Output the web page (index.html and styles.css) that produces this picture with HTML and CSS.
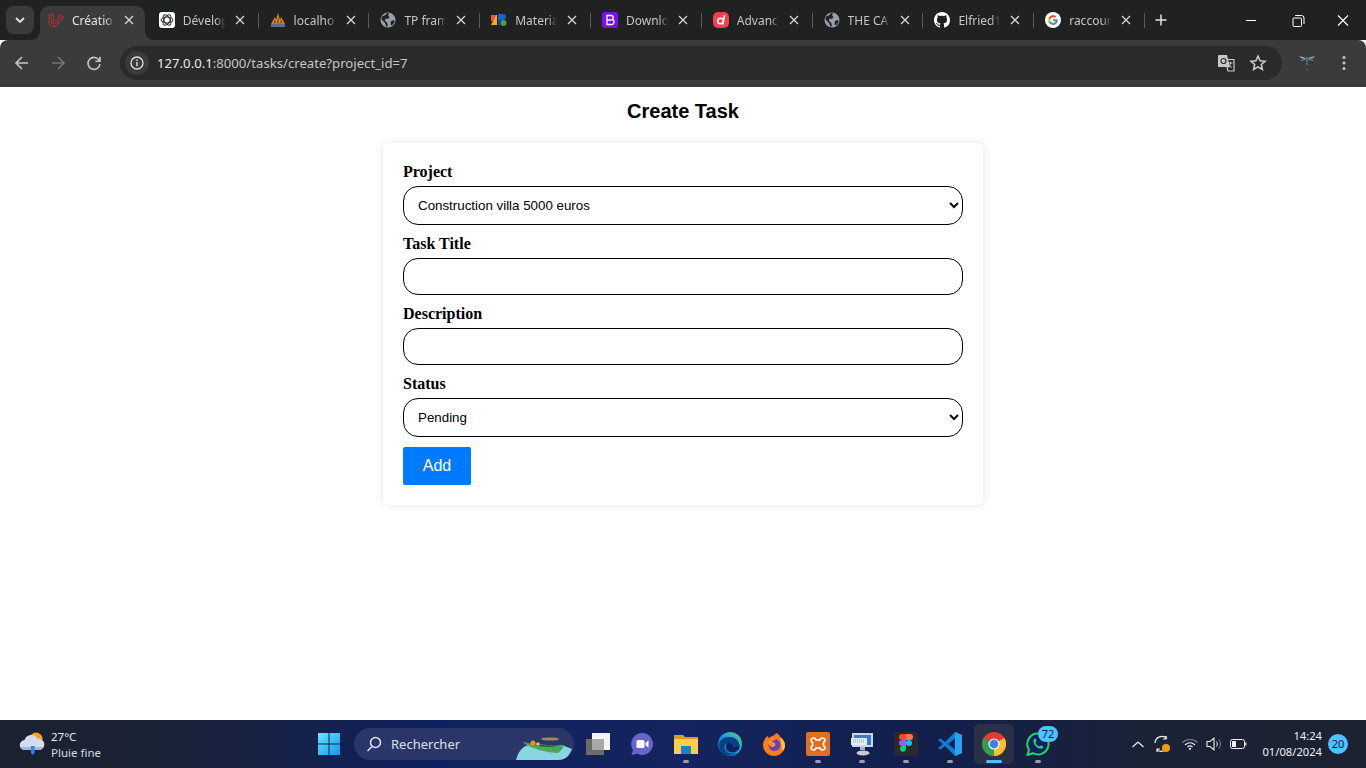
FILE: index.html
```html
<!DOCTYPE html>
<html lang="en">

<head>
    <meta charset="UTF-8">
    <meta name="viewport" content="width=device-width, initial-scale=1.0">
    <title>Create Task</title>
    <link rel="stylesheet" href="styles.css">
</head>

<body>
    <svg class="defs" aria-hidden="true">
        <symbol id="globe" viewBox="0 0 16 16">
            <circle cx="8" cy="8" r="7.500" fill="#9aa0a6" />
            <path d="M2 4.500 5.500 3 7 1l2 .5L8 3.500 9.500 5 8 7 5.500 6.500 5 9l2 1.500 1 3-1.500 1.500-1.500-4L2.500 8.500 1.500 7zM11 9l3-1 .5 2-2.500 3.500-1.500-1z" fill="#202124" />
        </symbol>
        <symbol id="x" viewBox="0 0 10 10">
            <path d="M1 1l8 8M9 1 1 9" fill="none" stroke="currentColor" stroke-width="1.300" />
        </symbol>
    </svg>

    <div class="tabstrip">
        <button class="tab-search">
            <svg width="10" height="6" viewBox="0 0 10 6"><path d="M1 1l4 4 4-4" fill="none" stroke="#e3e3e3" stroke-width="1.800" /></svg>
        </button>
        <div class="tabs">
            <div class="tab active">
                <svg class="favicon" viewBox="0 0 17 17"><path d="M1 3l2.500-1.500L6 3v7l5-2.500v-3L13.500 3 16 4.500v3l-5 3V13l-5 3-5-3zM1 3l2.500 1.500L6 3M3.500 4.500v7L6 13v3M3.500 11.500 6 10M6 13l5-2.500M11 4.500 13.500 6 16 4.500M13.500 6v3" fill="none" stroke="#c2322a" stroke-width=".9" /></svg>
                <span class="tab-title">Créatio</span>
                <svg class="tab-close"><use href="#x" /></svg>
            </div>
            <div class="tab">
                <svg class="favicon" viewBox="0 0 16 16"><rect width="16" height="16" rx="3" fill="#fff" /><g fill="none" stroke="#333" stroke-width="1.100"><ellipse cx="8" cy="8" rx="5.800" ry="3" /><ellipse cx="8" cy="8" rx="5.800" ry="3" transform="rotate(60 8 8)" /><ellipse cx="8" cy="8" rx="5.800" ry="3" transform="rotate(120 8 8)" /></g></svg>
                <span class="tab-title">Dévelop</span>
                <svg class="tab-close"><use href="#x" /></svg>
            </div>
            <div class="tab">
                <svg class="favicon" viewBox="0 0 16 16"><path d="M1 12 5 5l1 3 2-7 2 7 1-3 4 7z" fill="#e58a1f" /><path d="M7 11 8 4l1 7zM3.500 11 5 7l1 4zM10 11l1-4 1.500 4z" fill="#7a4a12" /><rect x="1" y="11.500" width="14" height="3.500" fill="#5a6a9a" /></svg>
                <span class="tab-title">localho</span>
                <svg class="tab-close"><use href="#x" /></svg>
            </div>
            <div class="tab">
                <svg class="favicon"><use href="#globe" /></svg>
                <span class="tab-title">TP fram</span>
                <svg class="tab-close"><use href="#x" /></svg>
            </div>
            <div class="tab">
                <svg class="favicon" viewBox="0 0 16 16"><path d="M0 3h5L2 9H0z" fill="#ef5350" /><path d="M0 13l5-10h1v10z" fill="#f9a825" /><path d="M7 2h5a2.500 2.500 0 0 1 0 6H7z" fill="#1565c0" /><circle cx="12.500" cy="11" r="3" fill="#43a047" /><path d="M7 8h3v5H7z" fill="#0d47a1" /></svg>
                <span class="tab-title">Materia</span>
                <svg class="tab-close"><use href="#x" /></svg>
            </div>
            <div class="tab">
                <svg class="favicon" viewBox="0 0 16 16"><rect width="16" height="16" rx="2.500" fill="#7a12f0" /><path d="M5 3.500h4a2.200 2.200 0 0 1 1 4.200 2.400 2.400 0 0 1-1 4.800H5zM5 8h4" fill="none" stroke="#fff" stroke-width="1.300" /></svg>
                <span class="tab-title">Downlo</span>
                <svg class="tab-close"><use href="#x" /></svg>
            </div>
            <div class="tab">
                <svg class="favicon" viewBox="0 0 16 16"><rect width="16" height="16" rx="5" fill="#f43f4e" /><circle cx="7.500" cy="9" r="2.800" fill="none" stroke="#fff" stroke-width="1.500" /><path d="M11.500 3 9.800 12.500" fill="none" stroke="#fff" stroke-width="1.500" /></svg>
                <span class="tab-title">Advanc</span>
                <svg class="tab-close"><use href="#x" /></svg>
            </div>
            <div class="tab">
                <svg class="favicon"><use href="#globe" /></svg>
                <span class="tab-title">THE CA</span>
                <svg class="tab-close"><use href="#x" /></svg>
            </div>
            <div class="tab">
                <svg class="favicon" viewBox="0 0 16 16"><path fill="#fff" d="M8 0C3.580 0 0 3.580 0 8c0 3.540 2.290 6.530 5.470 7.590.4.070.55-.17.550-.38 0-.19-.01-.82-.01-1.490-2.010.37-2.530-.49-2.690-.94-.09-.23-.48-.94-.82-1.130-.28-.15-.68-.52-.01-.53.630-.01 1.080.58 1.230.82.720 1.210 1.870.87 2.330.66.070-.52.280-.87.510-1.070-1.780-.2-3.640-.89-3.640-3.950 0-.87.310-1.590.820-2.150-.08-.2-.36-1.020.08-2.120 0 0 .67-.21 2.200.82.640-.18 1.320-.27 2-.27s1.360.09 2 .27c1.530-1.040 2.200-.82 2.200-.82.440 1.100.16 1.920.08 2.120.51.560.82 1.270.82 2.150 0 3.070-1.870 3.750-3.650 3.950.29.250.54.730.54 1.480 0 1.070-.01 1.930-.01 2.200 0 .21.150.46.550.38A8.010 8.010 0 0 0 16 8c0-4.420-3.580-8-8-8z" /></svg>
                <span class="tab-title">Elfried1</span>
                <svg class="tab-close"><use href="#x" /></svg>
            </div>
            <div class="tab">
                <svg class="favicon" viewBox="0 0 16 16"><circle cx="8" cy="8" r="8" fill="#fff" /><path d="M12.700 8.200c0-.4 0-.7-.1-1H8v1.900h2.600a2.300 2.300 0 0 1-1 1.500v1.200h1.600c1-.9 1.500-2.100 1.500-3.600z" fill="#4285f4" /><path d="M8 13c1.300 0 2.400-.4 3.200-1.200l-1.600-1.200c-.4.300-1 .5-1.600.5-1.300 0-2.300-.8-2.700-2H3.700v1.200A4.900 4.900 0 0 0 8 13z" fill="#34a853" /><path d="M5.300 9.100a3 3 0 0 1 0-1.900V6H3.700a4.900 4.900 0 0 0 0 4.400z" fill="#fbbc05" /><path d="M8 5c.7 0 1.300.2 1.800.7l1.400-1.400A4.900 4.900 0 0 0 3.700 6l1.600 1.200C5.700 6 6.700 5 8 5z" fill="#ea4335" /></svg>
                <span class="tab-title">raccour</span>
                <svg class="tab-close"><use href="#x" /></svg>
            </div>
            <button class="tab-new">
                <svg width="12" height="12" viewBox="0 0 12 12"><path d="M6 .5v11M.5 6h11" stroke="#e3e3e3" stroke-width="1.500" /></svg>
            </button>
        </div>
        <div class="win-controls">
            <svg class="win-btn" viewBox="0 0 46 40"><path d="M18 20.500h10" stroke="#fff" /></svg>
            <svg class="win-btn" viewBox="0 0 46 40"><path d="M20 18h6.500a1 1 0 0 1 1 1v6.500a1 1 0 0 1-1 1H20a1 1 0 0 1-1-1V19a1 1 0 0 1 1-1zM21 15.500h6.500a2.500 2.500 0 0 1 2.500 2.500v6" fill="none" stroke="#fff" /></svg>
            <svg class="win-btn" viewBox="0 0 46 40"><path d="M18 15.500l10 10M28 15.500l-10 10" stroke="#fff" stroke-width="1.100" /></svg>
        </div>
    </div>

    <div class="toolbar">
        <div class="nav-btns">
            <svg class="nav-btn" viewBox="0 0 36 36"><path d="M24 18H12.500M18 12l-6 6 6 6" fill="none" stroke="#c7c7c7" stroke-width="1.600" /></svg>
            <svg class="nav-btn" viewBox="0 0 36 36"><path d="M12 18h11.500M18 12l6 6-6 6" fill="none" stroke="#747474" stroke-width="1.600" /></svg>
            <svg class="nav-btn" viewBox="0 0 36 36"><path d="M23.300 15.500a6 6 0 1 0 .7 3.500M24 11.800v4.500h-4.500" fill="none" stroke="#c7c7c7" stroke-width="1.600" /></svg>
        </div>
        <div class="omnibox">
            <span class="site-info">
                <svg width="14" height="14" viewBox="0 0 14 14"><circle cx="7" cy="7" r="6" fill="none" stroke="#e3e3e3" stroke-width="1.300" /><path d="M7 6v4.200M7 3.600v1.300" stroke="#e3e3e3" stroke-width="1.400" /></svg>
            </span>
            <span class="url"><span class="url-host">127.0.0.1</span>:8000/tasks/create?project_id=7</span>
            <svg class="omni-icon translate" viewBox="0 0 18 18"><path d="M8 5.500h9v11.500h-6z" fill="none" stroke="#c7c7c7" stroke-width="1.200" /><path d="M2 1h8l3 12H2a1 1 0 0 1-1-1V2a1 1 0 0 1 1-1z" fill="#c7c7c7" /><circle cx="6.500" cy="7" r="2.500" fill="none" stroke="#2a2a2a" stroke-width="1.200" /><path d="M11.500 9h4M13.500 8v1c0 2-1 3.500-2 4.500M12 11c.8 1 1.500 1.800 3 2.500" fill="none" stroke="#c7c7c7" /></svg>
            <svg class="omni-icon" viewBox="0 0 18 18"><path d="M9 2l2.100 4.700 5 .5-3.800 3.300 1.100 5L9 12.900l-4.400 2.600 1.100-5L1.900 7.200l5-.5z" fill="none" stroke="#d0d0d0" stroke-width="1.500" /></svg>
        </div>
        <svg class="ext-icon" viewBox="0 0 18 20"><path d="M1 3.500c3 0 5 .5 7 2-2 .5-5 .5-7-2zM17 3.500c-3 0-5 .5-7 2 2 .5 5 .5 7-2z" fill="#9aa6ad" /><path d="M3 7.500c2-.5 4-1 5.500-1.500M15 7.500c-2-.5-4-1-5.500-1.500" stroke="#7c8a92" /><path d="M9 4v8" stroke="#5b8fb0" stroke-width="1.300" stroke-dasharray="2 1" /><path d="M9 15.500v2" stroke="#666" /></svg>
        <svg class="ext-menu" viewBox="0 0 4 16"><circle cx="2" cy="2.500" r="1.500" fill="#c7c7c7" /><circle cx="2" cy="8" r="1.500" fill="#c7c7c7" /><circle cx="2" cy="13.500" r="1.500" fill="#c7c7c7" /></svg>
    </div>

    <main class="page">
        <h2 class="page-title">Create Task</h2>
        <form class="task-form">
            <label for="project">Project</label>
            <select id="project">
                <option>Construction villa 5000 euros</option>
            </select>
            <label for="title">Task Title</label>
            <input type="text" id="title">
            <label for="description">Description</label>
            <input type="text" id="description">
            <label for="status">Status</label>
            <select id="status">
                <option>Pending</option>
            </select>
            <button type="button" class="add-btn">Add</button>
        </form>
    </main>

    <div class="taskbar">
        <div class="weather">
            <svg class="weather-icon" viewBox="0 0 28 26"><circle cx="18" cy="8" r="6.500" fill="#f5a623" /><path d="M7 19a5 5 0 0 1-.5-10 7 7 0 0 1 13-1 5.500 5.500 0 0 1 2.500 11z" fill="#d5dcf0" /><path d="M7 19a5 5 0 0 1-4-3h22a5 5 0 0 1-3 3z" fill="#aab4d8" /><path d="M13 15h3.500v7a1.800 1.800 0 0 1-3.500 0z" fill="#2b88f0" /></svg>
            <div class="weather-text">
                <div>27°C</div>
                <div class="weather-sub">Pluie fine</div>
            </div>
        </div>
        <div class="task-item">
            <svg class="task-icon" viewBox="0 0 24 24"><defs><linearGradient id="win" x1="0" y1="0" x2="1" y2="1"><stop offset="0" stop-color="#6fe3ff" /><stop offset="1" stop-color="#0a9be8" /></linearGradient></defs><path d="M1 1h10.500v10.500H1zM12.500 1H23v10.500H12.500zM1 12.500h10.500V23H1zM12.500 12.500H23V23H12.500z" fill="url(#win)" /></svg>
        </div>
        <div class="search">
            <svg width="16" height="16" viewBox="0 0 16 16"><circle cx="9.500" cy="6.500" r="5" fill="none" stroke="#e3e6f0" stroke-width="1.500" /><path d="M6 10.500 1.500 15" stroke="#e3e6f0" stroke-width="1.500" /></svg>
            <span class="search-label">Rechercher</span>
            <svg class="search-art" viewBox="0 0 58 32"><path d="M0 32c2-8 6-13 12-15h34l10 4c-2 5-5 9-9 11z" fill="#8ad6e0" /><path d="M6 14c10 7 26 11 36 11 3-2 5-5 6-8-12 1-28-1-42-3z" fill="#4aa65c" /><path d="M10 15c10 2 24 3 34 2-8 3-22 2-34-2z" fill="#24532f" /><circle cx="17" cy="15" r="2.600" fill="#f08a24" /><circle cx="22" cy="16" r="1.800" fill="#e9c46a" /><ellipse cx="34" cy="11" rx="9" ry="1.600" fill="#a88656" /></svg>
        </div>
        <div class="task-apps">
            <div class="task-item">
                <svg class="task-icon" viewBox="0 0 24 24"><rect x="6" y="1" width="18" height="17" fill="#f4f4f4" /><rect x="0" y="7" width="18" height="16" fill="#6b6b6b" /><rect x="6" y="7" width="12" height="11" fill="#a8a8a8" /></svg>
            </div>
            <div class="task-item">
                <svg class="task-icon" viewBox="0 0 24 24"><path d="M12 1a11 11 0 1 1-5 20.800L1.500 23 3 18A11 11 0 0 1 12 1z" fill="#6a63c9" /><rect x="6.500" y="8" width="8" height="8" rx="1.500" fill="#fff" /><path d="M15.500 11l3-2.500v7l-3-2.500z" fill="#fff" /></svg>
            </div>
            <div class="task-item running">
                <svg class="task-icon" viewBox="0 0 24 24"><path d="M0 3h9l2 2h13v3H0z" fill="#d99c1c" /><path d="M0 7h24v15H0z" fill="#fbcf4a" /><rect x="7" y="14" width="10" height="8" rx="1" fill="#1c7fd0" /></svg>
            </div>
            <div class="task-item">
                <svg class="task-icon" viewBox="0 0 24 24"><defs><linearGradient id="edge" x1="0" y1="1" x2="1" y2="0"><stop offset="0" stop-color="#0c59a4" /><stop offset=".55" stop-color="#1b9de2" /><stop offset="1" stop-color="#5ad66a" /></linearGradient></defs><circle cx="12" cy="12" r="12" fill="url(#edge)" /><path d="M1 12C3 6 8 4.500 13 5c5 .5 8 4 8.500 8.500L16 15c-1-3-3-4.500-6-4-4 .5-5 6-1 9.500 2 1.500 6 1.500 9-.5-3 3.500-8 4.500-12 2.500C2.500 20.500 1 16 1 12z" fill="#0a3f88" /><path d="M10 11c3-.5 5 1 6 4l5.500-1.500c.5 3-1 5-3.500 6-3 1.500-6.500 1-8.500-1-2.500-2.500-1.500-7 .5-7.500z" fill="#0d2060" /></svg>
            </div>
            <div class="task-item">
                <svg class="task-icon" viewBox="0 0 24 24"><path d="M2 9C3 6 4 5 6 4c0 1 .5 2 1 2 2-2 6-2 7-5 3 1 4 3 4 4 3 2 5 5 5 8.500C23 19 18 24 12 24S1 19 1 13c0-1.500.3-3 1-4z" fill="#ff7b1c" /><path d="M18 5c3 2 5 5 5 8.500 0 2-1 4-2 5-2 1-1-10-3-13.500z" fill="#ffc93a" /><circle cx="12.500" cy="13" r="6" fill="#6a3bc7" /><path d="M6 10c2-3 6-4 8-2-3 0-4 1-4 2 3 0 4 2 3 4-2 2-6 1-7-4z" fill="#ff8f2b" /></svg>
            </div>
            <div class="task-item running">
                <svg class="task-icon" viewBox="0 0 24 24"><rect width="24" height="24" rx="2" fill="#e0701f" /><path d="M6 6.500c2-1 3.500 0 4 1.500h4c.5-1.500 2-2.500 4-1.500 1.500 1 1 3-.5 4v3c1.500 1 2 3 .5 4-2 1-3.500 0-4-1.500h-4c-.5 1.500-2 2.500-4 1.500-1.500-1-1-3 .5-4v-3c-1.500-1-2-3-.5-4z" fill="none" stroke="#fff" stroke-width="1.600" /></svg>
            </div>
            <div class="task-item running">
                <svg class="task-icon" viewBox="0 0 24 24"><rect x="2" y="1" width="21" height="14" fill="#c9d6ea" /><rect x="4" y="3" width="17" height="10" fill="#3e78c9" /><path d="M1 6h16v7H1z" fill="#e4ecf7" /><path d="M3 8h12M3 10h12" stroke="#7fa3d0" stroke-dasharray="1 1" /><path d="M10 15h5v3h-5z" fill="#aab0b8" /><ellipse cx="13" cy="21" rx="6.500" ry="2.500" fill="#c8ccd0" /></svg>
            </div>
            <div class="task-item running">
                <svg class="task-icon" viewBox="0 0 24 24"><rect width="24" height="24" rx="2" fill="#2a2a2a" /><path d="M8 2h4v6H8a3 3 0 0 1 0-6z" fill="#f24e1e" /><path d="M12 2h4a3 3 0 0 1 0 6h-4z" fill="#ff7262" /><path d="M8 8h4v6H8a3 3 0 0 1 0-6z" fill="#a259ff" /><circle cx="15" cy="11" r="3" fill="#1abcfe" /><path d="M8 14h4v3a3 3 0 1 1-4-3z" fill="#0acf83" /></svg>
            </div>
            <div class="task-item running">
                <svg class="task-icon" viewBox="0 0 24 24"><path d="M17 0 7 10 2.500 6.500 0 8l5 4-5 4 2.500 1.500L7 14l10 10 7-3V3z" fill="#0a7fcf" /><path d="M17 6.500 10 12l7 5.500z" fill="#0d2060" /><path d="M17 0l7 3v18l-7 3z" fill="#24a5ee" /></svg>
            </div>
            <div class="task-item current">
                <svg class="task-icon" viewBox="0 0 24 24"><circle cx="12" cy="12" r="12" fill="#e33b2e" /><path d="M12 12 22.400 6A12 12 0 0 1 12 24z" fill="#fbc02d" /><path d="M12 12 12 24A12 12 0 0 1 1.600 6z" fill="#2e9e4f" /><circle cx="12" cy="12" r="5.600" fill="#fff" /><circle cx="12" cy="12" r="4.400" fill="#3f7fe8" /></svg>
            </div>
            <div class="task-item running">
                <svg class="task-icon" viewBox="0 0 24 24"><path d="M12 1.500a10.500 10.500 0 1 1-5 19.700L1.500 23 3 17.700A10.500 10.500 0 0 1 12 1.500z" fill="#0d2060" stroke="#25d366" stroke-width="2" /><path d="M8 7c1-1 2-.5 2 .5l.5 2-1 1c.5 2 2 3.500 4 4l1-1 2 .5c1 .3 1 1.500 0 2.300-3 2-10-3-9-8.300z" fill="#25d366" /></svg>
                <span class="task-badge">72</span>
            </div>
        </div>
        <div class="tray">
            <svg class="tray-chevron" viewBox="0 0 12 7"><path d="M.5 6 6 1l5.500 5" fill="none" stroke="#f0f0f0" stroke-width="1.200" /></svg>
            <span class="tray-sync">
                <svg viewBox="0 0 18 18" width="18" height="18"><path d="M2 8a7 7 0 0 1 12-4.500M13 1v3h-3M15 10a7 7 0 0 1-11 5M4 17v-3h3" fill="none" stroke="#f0f0f0" stroke-width="1.200" /><circle cx="13" cy="13" r="4" fill="#f59a0c" /></svg>
            </span>
            <svg class="tray-wifi" viewBox="0 0 16 12"><path d="M.5 4.500C4.500.5 11.500.5 15.500 4.500" fill="none" stroke="#7f8590" stroke-width="1.100" /><path d="M3 7c3-2.800 7-2.800 10 0M5.500 9c1.500-1.300 3.500-1.300 5 0" fill="none" stroke="#f0f0f0" stroke-width="1.100" /><circle cx="8" cy="10.800" r="1.100" fill="#f0f0f0" /></svg>
            <svg class="tray-volume" viewBox="0 0 17 14"><path d="M1 4.500h3L8 1.200v11.600L4 9.500H1z" fill="none" stroke="#f0f0f0" stroke-width="1.100" /><path d="M10.500 4.500c1 1.500 1 3.500 0 5" fill="none" stroke="#f0f0f0" /><path d="M13 2.500c2 2.500 2 6.500 0 9" fill="none" stroke="#7f8590" /></svg>
            <svg class="tray-battery" viewBox="0 0 17 10"><rect x=".5" y=".5" width="14" height="9" rx="2" fill="none" stroke="#f0f0f0" /><rect x="2" y="2" width="4" height="6" rx=".5" fill="#f0f0f0" /><path d="M15.800 3.500v3" stroke="#f0f0f0" stroke-width="1.200" /></svg>
            <div class="clock">
                <div>14:24</div>
                <div>01/08/2024</div>
            </div>
            <span class="notif">20</span>
        </div>
    </div>
</body>

</html>
```

FILE: styles.css
```css
* {
    box-sizing: border-box;
}

body {
    display: flex;
    flex-direction: column;
    height: 100vh;
    margin: 0;
    overflow: hidden;
    background: #fff;
    font-family: 'Liberation Serif', serif;
}

.defs {
    display: none;
}

/* browser chrome */
.tabstrip {
    display: flex;
    height: 40px;
    background: #202222;
    font-family: 'Noto Sans', sans-serif;
}

.tab-search {
    flex: none;
    display: flex;
    align-items: center;
    justify-content: center;
    width: 28px;
    height: 28px;
    margin: 6px 3px 0 6px;
    padding: 0;
    background: #3b3b3b;
    border: none;
    border-radius: 8px;
}

.tabs {
    display: flex;
    flex: 1;
}

.tab {
    position: relative;
    flex: none;
    display: flex;
    align-items: center;
    width: 110.8px;
    height: 40px;
    padding: 0 0 0 11px;
    color: #c4c7c5;
    font-size: 12px;
}

.tab:not(.active)::after {
    content: '';
    position: absolute;
    right: 0;
    top: 13px;
    width: 1px;
    height: 15px;
    background: #5a5c5c;
}

.tab.active {
    z-index: 1;
    color: #e3e3e3;
}

.tab.active::before {
    content: '';
    position: absolute;
    z-index: -1;
    left: 3px;
    right: 3px;
    top: 6px;
    bottom: 0;
    background: #3b3b3b;
    border-radius: 9px 9px 0 0;
}

/* concave corners where the active tab meets the toolbar */
.tab.active::after {
    content: '';
    position: absolute;
    z-index: -1;
    left: -5px;
    right: -5px;
    bottom: 0;
    height: 8px;
    background:
        radial-gradient(circle at 0 0, transparent 7.5px, #3b3b3b 8px) left / 8px 8px no-repeat,
        radial-gradient(circle at 100% 0, transparent 7.5px, #3b3b3b 8px) right / 8px 8px no-repeat;
}

.favicon {
    flex: none;
    width: 16px;
    height: 16px;
}

.tab-title {
    flex: none;
    width: 46px;
    margin-left: 8px;
    overflow: hidden;
    white-space: nowrap;
    -webkit-mask-image: linear-gradient(90deg, #000 72%, transparent 92%);
    mask-image: linear-gradient(90deg, #000 72%, transparent 92%);
}

.tab-close {
    flex: none;
    width: 10px;
    height: 10px;
    margin-left: 6px;
    color: #d5d7d6;
}

.tab-new {
    flex: none;
    display: flex;
    align-items: center;
    justify-content: center;
    width: 28px;
    height: 28px;
    margin: 6px 0 0 2px;
    padding: 0;
    background: none;
    border: none;
}

.win-controls {
    flex: none;
    display: flex;
}

.win-btn {
    width: 46px;
    height: 40px;
}

.toolbar {
    flex: none;
    display: flex;
    align-items: center;
    height: 47px;
    padding: 0 0 1px 4px;
    background: #3b3b3b;
    border-radius: 8px 8px 0 0;
}

.nav-btns {
    display: flex;
    flex: none;
}

.nav-btn {
    width: 36px;
    height: 36px;
}

.omnibox {
    flex: none;
    display: flex;
    align-items: center;
    width: 1162px;
    height: 34px;
    margin: 0 0 1px 8px;
    padding-left: 5px;
    background: #2a2a2a;
    border-radius: 17px;
    font-family: 'Noto Sans', sans-serif;
}

.site-info {
    flex: none;
    display: flex;
    align-items: center;
    justify-content: center;
    width: 24px;
    height: 24px;
    background: #3b3b3b;
    border-radius: 50%;
}

.url {
    flex: 1;
    margin-left: 8px;
    color: #c4c7c5;
    font-size: 13.16px;
    white-space: nowrap;
}

.url-host {
    color: #e8eaed;
}

.omni-icon {
    flex: none;
    width: 18px;
    height: 18px;
    margin-right: 15px;
}

.translate {
    margin-right: 14px;
}

.ext-icon {
    flex: none;
    width: 18px;
    height: 20px;
    margin-left: 16px;
}

.ext-menu {
    flex: none;
    width: 4px;
    height: 16px;
    margin-left: 26px;
}

/* page */
.page {
    flex: 1;
    min-height: 0;
    padding-top: 12px;
}

.page-title {
    margin: 0 0 20px;
    color: #000;
    font: bold 20px/24px 'Liberation Sans', sans-serif;
    text-align: center;
}

.task-form {
    display: flex;
    flex-direction: column;
    align-items: flex-start;
    width: 600px;
    margin: 0 auto;
    padding: 20px;
    background: #fff;
    border-radius: 5px;
    box-shadow: 0 0 10px rgba(0, 0, 0, 0.1);
}

.task-form label {
    margin-bottom: 5px;
    color: #000;
    font-size: 16px;
    font-weight: bold;
    line-height: 18px;
}

.task-form input,
.task-form select {
    width: 100%;
    margin-bottom: 10px;
    padding: 10px;
    background: #fff;
    color: #000;
    border: 1px solid #000;
    border-radius: 15px;
    font-family: 'Liberation Sans', sans-serif;
    font-size: 13.33px;
}

.task-form input {
    height: 37px;
}

.task-form select {
    height: 39px;
}

.add-btn {
    width: 68px;
    height: 38px;
    padding: 0;
    background: #007bff;
    color: #fff;
    border: none;
    border-radius: 2px;
    font: 16px 'Liberation Sans', sans-serif;
}

/* windows taskbar */
.taskbar {
    flex: none;
    display: flex;
    align-items: center;
    height: 48px;
    background: linear-gradient(90deg, #1b2230 0%, #1a2236 12%, #0f2160 32%, #14245e 50%, #121f4c 68%, #1a2236 84%, #1b2230 100%);
    font-family: 'Noto Sans', sans-serif;
}

.weather {
    flex: none;
    display: flex;
    align-items: center;
    width: 307px;
    padding-left: 18px;
    color: #f0f0f0;
    font-size: 11.5px;
    line-height: 16px;
}

.weather-icon {
    width: 28px;
    height: 26px;
}

.weather-text {
    margin: 2px 0 0 5px;
}

.weather-sub {
    color: #d8dae0;
}

.task-item {
    position: relative;
    flex: none;
    display: flex;
    align-items: center;
    justify-content: center;
    width: 44px;
    height: 48px;
}

.task-icon {
    width: 24px;
    height: 24px;
}

.task-item.running::after,
.task-item.current::after {
    content: '';
    position: absolute;
    left: 19px;
    bottom: 5px;
    width: 6px;
    height: 3px;
    background: #9aa0ab;
    border-radius: 2px;
}

.task-item.current::before {
    content: '';
    position: absolute;
    left: 2px;
    top: 4px;
    width: 40px;
    height: 40px;
    background: #2a3048;
    border-radius: 5px;
}

.task-item.current .task-icon {
    position: relative;
}

.task-item.current::after {
    left: 14px;
    width: 16px;
    background: #4cc2ff;
}

.task-badge {
    position: absolute;
    left: 22px;
    top: 6px;
    width: 20px;
    height: 16px;
    background: #4cc2ff;
    color: #10203c;
    border-radius: 8px;
    font-size: 11px;
    line-height: 16px;
    text-align: center;
}

.search {
    flex: none;
    display: flex;
    align-items: center;
    width: 220px;
    height: 32px;
    margin-left: 3px;
    padding-left: 12px;
    background: #2a3668;
    border-radius: 16px;
    overflow: hidden;
}

.search-label {
    flex: 1;
    margin-left: 9px;
    color: #dde0ea;
    font-size: 13px;
}

.search-art {
    flex: none;
    width: 58px;
    height: 32px;
}

.task-apps {
    flex: none;
    display: flex;
    margin-left: 2px;
}

.tray {
    flex: 1;
    display: flex;
    align-items: center;
    justify-content: flex-end;
    padding-right: 18px;
    color: #f0f0f0;
}

.tray-chevron {
    width: 12px;
    height: 7px;
    margin-right: 9px;
}

.tray-sync {
    display: flex;
    margin-right: 11px;
}

.tray-wifi {
    width: 16px;
    height: 12px;
    margin-right: 8px;
}

.tray-volume {
    width: 17px;
    height: 14px;
    margin-right: 7px;
}

.tray-battery {
    width: 17px;
    height: 10px;
    margin-right: 15px;
}

.clock {
    font-size: 11.2px;
    line-height: 16px;
    text-align: right;
}

.notif {
    width: 20px;
    height: 20px;
    margin-left: 6px;
    background: #4cc2ff;
    color: #10203c;
    border-radius: 50%;
    font-size: 11px;
    line-height: 20px;
    text-align: center;
}
```
